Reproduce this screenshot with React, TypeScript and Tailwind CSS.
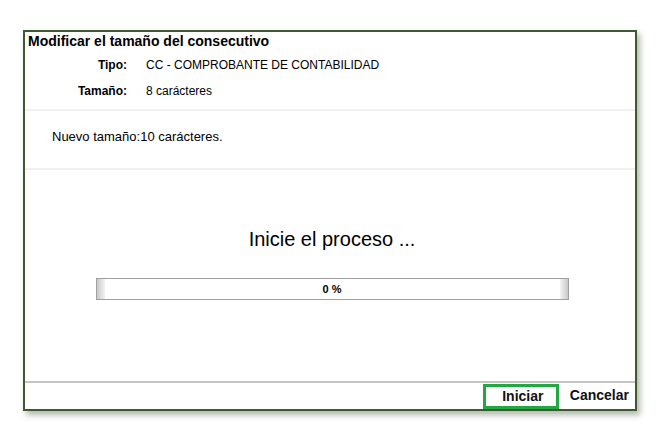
import React from 'react';

export default function App() {
  return (
    <div className="w-[666px] h-[430px] bg-white pt-[30px] pl-[23px] font-['Liberation_Sans',Arial,sans-serif] text-black">
      {/* dialog */}
      <div className="w-[614px] h-[381px] border-2 border-[#3f5a33] bg-white flex flex-col shadow-[3px_4px_6px_rgba(80,100,70,0.45)]">
        <div className="pl-[3px] pt-[1px] text-[14px] font-bold leading-[17px]">Modificar el tamaño del consecutivo</div>

        <div className="flex flex-col text-[12px] leading-[14px] mt-[2px]">
          <div className="flex items-center h-[26px]">
            <span className="w-[102px] text-right font-bold">Tipo:</span>
            <span className="ml-[19px]">CC - COMPROBANTE DE CONTABILIDAD</span>
          </div>
          <div className="flex items-center h-[26px]">
            <span className="w-[102px] text-right font-bold">Tamaño:</span>
            <span className="ml-[19px]">8 carácteres</span>
          </div>
        </div>

        <div className="mt-[5px] border-t-2 border-[#f1f1f1]" />

        <div className="h-[57px] flex items-center pl-[27px] text-[13px] pb-[6px]">
          Nuevo tamaño:10&nbsp;carácteres.
        </div>

        <div className="border-t-2 border-[#f1f1f1]" />

        <div className="flex-1 flex flex-col items-center pl-[4px]">
          <div className="mt-[57px] text-[20px] leading-[24px]">Inicie el proceso ...</div>
          <div className="mt-[27px] w-[473px] h-[22px] border border-[#a0a0a0] flex items-stretch">
            <div className="w-[8px] bg-gradient-to-r from-[#c8c8c8] to-[#f4f4f4]" />
            <div className="flex-1 flex items-center justify-center text-[11px] font-bold">0 %</div>
            <div className="w-[8px] bg-gradient-to-r from-[#f4f4f4] to-[#c8c8c8]" />
          </div>
        </div>

        <div className="border-t-2 border-[#c4c4c4] h-[28px] flex items-center justify-end pr-[6px] gap-[11px]">
          <button className="w-[76px] h-[25px] border-[3px] border-[#21a840] text-[14px] font-bold text-[#111] flex items-center justify-center pl-[4px]">
            Iniciar
          </button>
          <button className="text-[14px] font-bold text-[#111] pb-[1px]">Cancelar</button>
        </div>
      </div>
    </div>
  );
}
